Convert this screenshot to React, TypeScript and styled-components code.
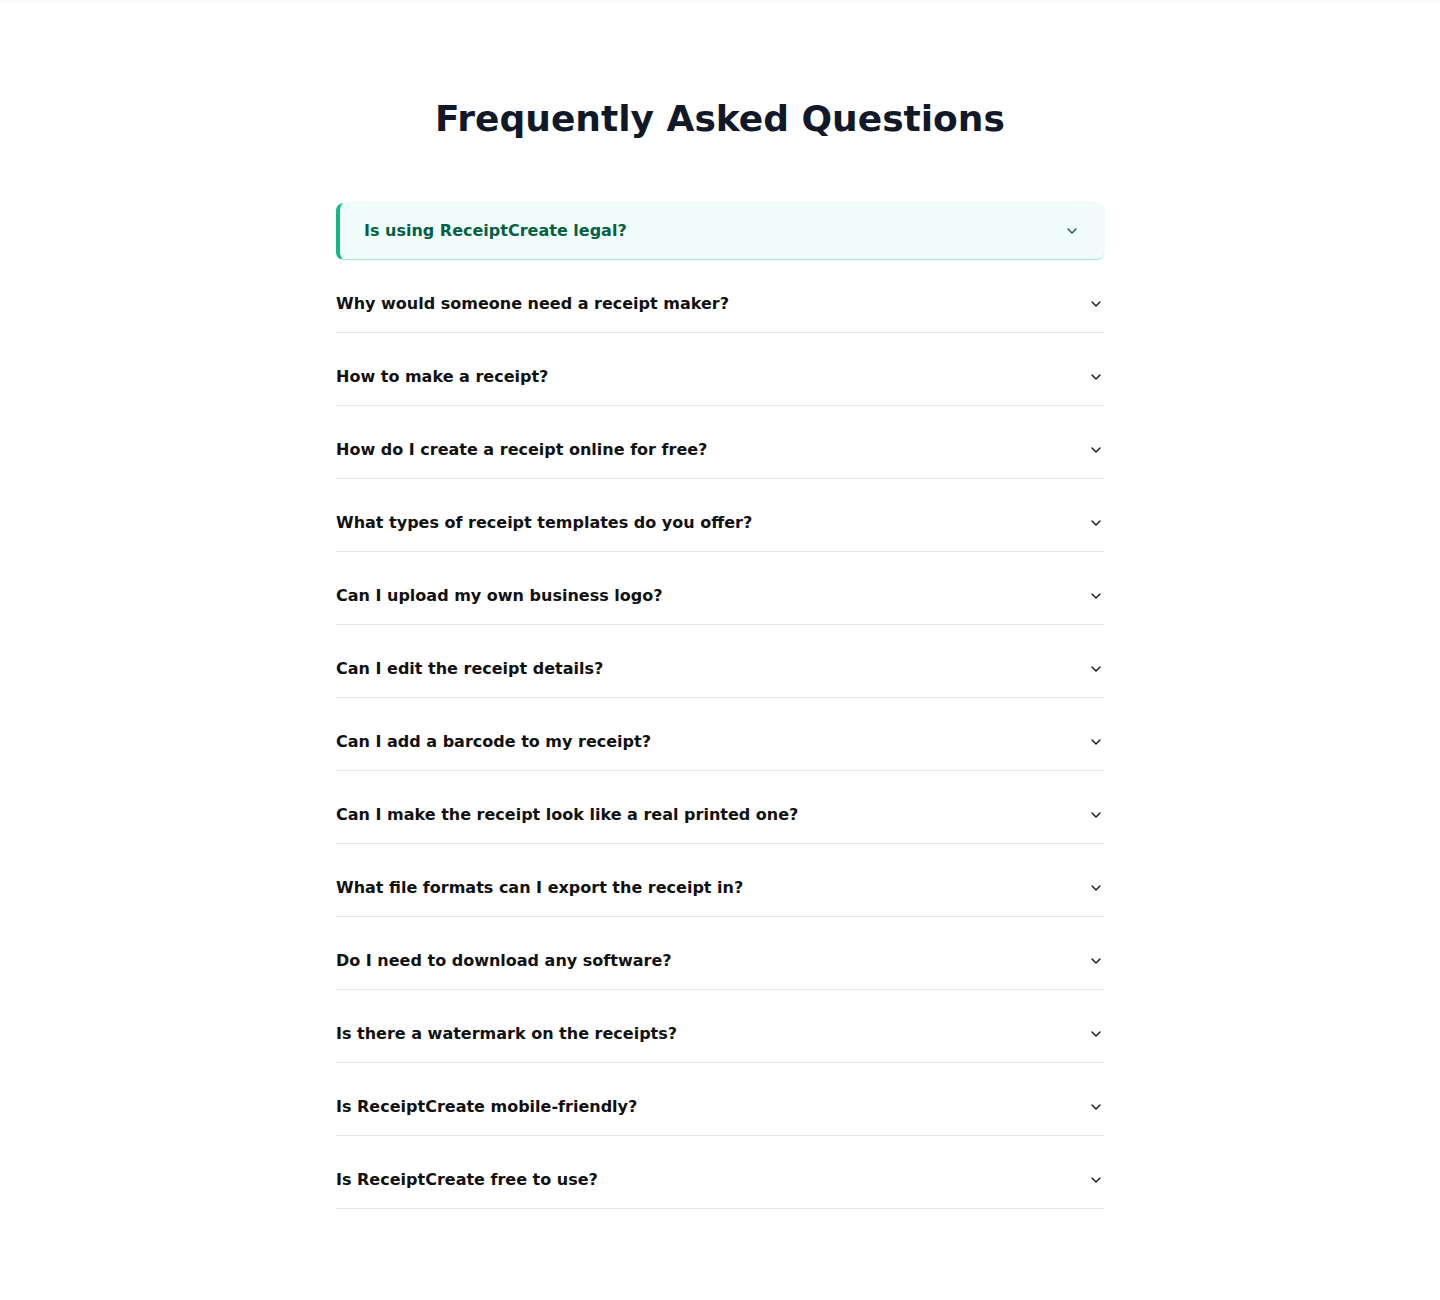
import { useState } from 'react';
import styled, { createGlobalStyle } from 'styled-components';
import { ChevronDown } from 'lucide-react';

const GlobalStyle = createGlobalStyle`
  * { box-sizing: border-box; }
  body {
    margin: 0;
    background: #ffffff;
    font-family: "DejaVu Sans", "Noto Sans", sans-serif;
  }
`;

const TopBar = styled.div`
  height: 3px;
  background-color: #f9fafb;
`;

const Section = styled.section`
  padding: 96px 16px 80px;
`;

const Container = styled.div`
  max-width: 768px;
  margin: 0 auto;
`;

const Title = styled.h2`
  margin: 0 0 64px;
  font-size: 36px;
  line-height: 40px;
  font-weight: 700;
  color: #111827;
  text-align: center;
`;

const List = styled.div`
  display: flex;
  flex-direction: column;
  gap: 16px;
`;

const Item = styled.div<{ $open: boolean }>`
  border-bottom: 1px solid ${(p) => (p.$open ? '#a7f3d0' : '#e5e7eb')};
  border-left: ${(p) => (p.$open ? '4px solid #10b981' : 'none')};
  border-radius: ${(p) => (p.$open ? '8px' : '0')};
  background-color: ${(p) => (p.$open ? '#f0fdfa' : 'transparent')};
  box-shadow: ${(p) => (p.$open ? '0 0 0 1px rgba(209, 250, 229, 0.35)' : 'none')};
`;

const Question = styled.button<{ $open: boolean }>`
  width: 100%;
  height: 56px;
  display: flex;
  align-items: center;
  justify-content: space-between;
  padding: ${(p) => (p.$open ? '0 24px' : '0')};
  border: none;
  background: none;
  cursor: pointer;
  font-family: inherit;
  font-size: 16px;
  line-height: 24px;
  font-weight: 700;
  text-align: left;
  color: ${(p) => (p.$open ? '#065f46' : '#111111')};
`;

const Icon = styled(ChevronDown)<{ $open: boolean }>`
  flex-shrink: 0;
  color: ${(p) => (p.$open ? '#065f46' : '#111111')};
`;

const questions = [
  'Is using ReceiptCreate legal?',
  'Why would someone need a receipt maker?',
  'How to make a receipt?',
  'How do I create a receipt online for free?',
  'What types of receipt templates do you offer?',
  'Can I upload my own business logo?',
  'Can I edit the receipt details?',
  'Can I add a barcode to my receipt?',
  'Can I make the receipt look like a real printed one?',
  'What file formats can I export the receipt in?',
  'Do I need to download any software?',
  'Is there a watermark on the receipts?',
  'Is ReceiptCreate mobile-friendly?',
  'Is ReceiptCreate free to use?',
];

function App() {
  const [active, setActive] = useState(0);

  return (
    <>
      <GlobalStyle />
      <TopBar />
      <Section>
        <Container>
          <Title>Frequently Asked Questions</Title>
          <List>
            {questions.map((q, i) => {
              const open = i === active;
              return (
                <Item key={q} $open={open}>
                  <Question $open={open} onClick={() => setActive(open ? -1 : i)}>
                    <span>{q}</span>
                    <Icon $open={open} size={16} strokeWidth={2} />
                  </Question>
                </Item>
              );
            })}
          </List>
        </Container>
      </Section>
    </>
  );
}

export default App;
